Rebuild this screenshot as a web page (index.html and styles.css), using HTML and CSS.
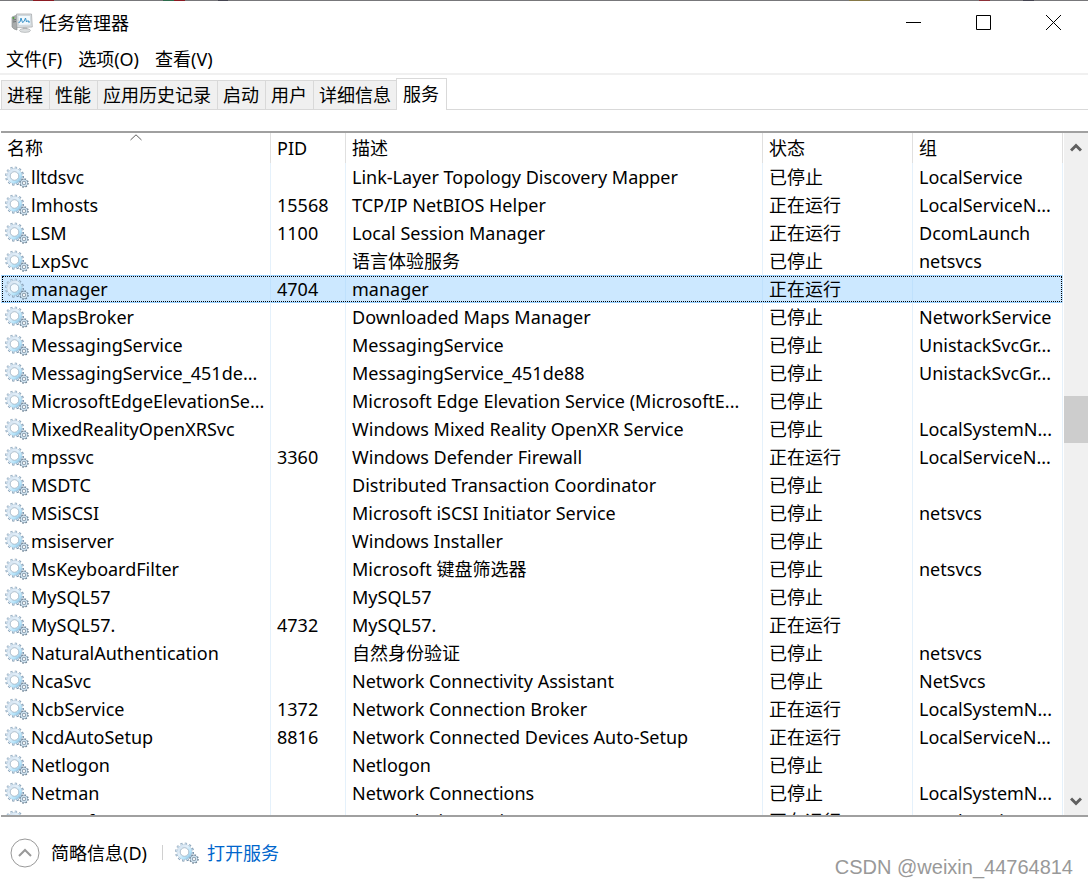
FILE: index.html
```html
<!DOCTYPE html>
<html lang="zh-CN">
<head>
  <meta charset="UTF-8" />
  <title>任务管理器</title>
  <link rel="stylesheet" href="styles.css">
</head>
<body>
  <!-- shared icons -->
  <svg class="sprite" aria-hidden="true">
    <defs>
      <linearGradient id="gear-fill" x1="0" y1="0" x2="1" y2="1">
        <stop offset="0" stop-color="#d3e2f0" />
        <stop offset="0.4" stop-color="#e3f0fa" />
        <stop offset="0.75" stop-color="#b4e4fb" />
        <stop offset="1" stop-color="#8fb9d8" />
      </linearGradient>
      <linearGradient id="gear-edge" x1="0" y1="0" x2="1" y2="1">
        <stop offset="0" stop-color="#a9bccd" />
        <stop offset="1" stop-color="#5f7f9b" />
      </linearGradient>
    </defs>
    <symbol id="gears" viewBox="0 0 24 22">
      <circle cx="9.5" cy="10" r="8.300" fill="none" stroke="url(#gear-edge)" stroke-width="2.400" stroke-dasharray="2.150 2.200" />
      <circle cx="9.5" cy="10" r="7.900" fill="none" stroke="#d6e8f5" stroke-width="1.600" stroke-dasharray="1.200 2.936" stroke-dashoffset="-0.450" />
      <circle cx="9.5" cy="10" r="7.400" fill="none" stroke="#9db6ca" stroke-width="0.600" />
      <circle cx="9.5" cy="10" r="5.900" fill="none" stroke="url(#gear-fill)" stroke-width="3" />
      <circle cx="9.5" cy="10" r="4.300" fill="#fff" fill-opacity="0.800" stroke="#8ba3b8" stroke-width="0.700" />
      <circle cx="19" cy="17" r="4" fill="none" stroke="#6f8496" stroke-width="1.600" stroke-dasharray="1.500 1.642" />
      <circle cx="19" cy="17" r="2.800" fill="#fff" stroke="#7b92a6" stroke-width="1.800" />
      <circle cx="19" cy="17" r="2.700" fill="none" stroke="#d4e8f5" stroke-width="1.100" />
      <circle cx="19" cy="17" r="1.600" fill="none" stroke="#71879a" stroke-width="0.700" />
    </symbol>
  </svg>

  <div class="window">
    <header class="titlebar">
      <svg class="app-icon" viewBox="0 0 22 20" aria-hidden="true">
        <path d="M1 4l5-2v15l-3-1-2-2z" fill="#a9acac" stroke="#858989" stroke-width="0.6" />
        <path d="M2 7l3-.5M2 9l3-.5" stroke="#5f6464" stroke-width="0.8" />
        <circle cx="2.5" cy="5" r="0.9" fill="#4ea83a" />
        <path d="M5.500 1h15l.8 13-15.300.5z" fill="#dfe2e4" stroke="#a1a5a8" stroke-width="0.7" />
        <path d="M7 2.500h12.300l.6 9.500-12.300.4z" fill="#f2f9fd" stroke="#b7c3cb" stroke-width="0.5" />
        <path d="M7.500 9.500l1.500-.5 1-4 1.500 4.500 1.500-1 1.500-3.500 1 4 1.500-1.500.8 2 1.200-1" fill="none" stroke="#3a93c9" stroke-width="1" />
        <path d="M12 14.500h4l1 2.500-6 .5z" fill="#a9adaf" />
        <ellipse cx="14" cy="17.500" rx="5.500" ry="1.900" fill="#dcdfe0" stroke="#a4a8aa" stroke-width="0.6" />
      </svg>
      <h1 class="title">任务管理器</h1>
      <div class="window-controls">
        <button type="button" aria-label="最小化"><svg viewBox="0 0 15 15"><path d="M0 7.500h15" /></svg></button>
        <button type="button" aria-label="最大化"><svg viewBox="0 0 15 15"><path d="M.5.5h14v14H.5z" /></svg></button>
        <button type="button" aria-label="关闭"><svg viewBox="0 0 15 15"><path d="M0 0l15 15M15 0L0 15" /></svg></button>
      </div>
    </header>

    <nav class="menubar">
      <button type="button">文件(F)</button>
      <button type="button">选项(O)</button>
      <button type="button">查看(V)</button>
    </nav>

    <div class="tabs" role="tablist">
      <button type="button" role="tab">进程</button>
      <button type="button" role="tab">性能</button>
      <button type="button" role="tab">应用历史记录</button>
      <button type="button" role="tab">启动</button>
      <button type="button" role="tab">用户</button>
      <button type="button" role="tab">详细信息</button>
      <button type="button" role="tab" class="active" aria-selected="true">服务</button>
    </div>

    <main class="list">
      <div class="list-view">
        <table class="services">
          <colgroup>
            <col class="col-name">
            <col class="col-pid">
            <col class="col-desc">
            <col class="col-status">
            <col class="col-group">
          </colgroup>
          <thead>
            <tr>
              <th class="sorted">名称<svg class="sort-arrow" viewBox="0 0 12 7" aria-hidden="true"><path d="M.5 6L6 .8 11.500 6" /></svg></th>
              <th>PID</th>
              <th>描述</th>
              <th>状态</th>
              <th>组</th>
            </tr>
          </thead>
          <tbody>
            <tr><td><svg class="gear"><use href="#gears" /></svg>lltdsvc</td><td></td><td>Link-Layer Topology Discovery Mapper</td><td>已停止</td><td>LocalService</td></tr>
            <tr><td><svg class="gear"><use href="#gears" /></svg>lmhosts</td><td>15568</td><td>TCP/IP NetBIOS Helper</td><td>正在运行</td><td>LocalServiceN...</td></tr>
            <tr><td><svg class="gear"><use href="#gears" /></svg>LSM</td><td>1100</td><td>Local Session Manager</td><td>正在运行</td><td>DcomLaunch</td></tr>
            <tr><td><svg class="gear"><use href="#gears" /></svg>LxpSvc</td><td></td><td>语言体验服务</td><td>已停止</td><td>netsvcs</td></tr>
            <tr class="selected"><td><svg class="gear"><use href="#gears" /></svg>manager</td><td>4704</td><td>manager</td><td>正在运行</td><td></td></tr>
            <tr><td><svg class="gear"><use href="#gears" /></svg>MapsBroker</td><td></td><td>Downloaded Maps Manager</td><td>已停止</td><td>NetworkService</td></tr>
            <tr><td><svg class="gear"><use href="#gears" /></svg>MessagingService</td><td></td><td>MessagingService</td><td>已停止</td><td>UnistackSvcGr...</td></tr>
            <tr><td><svg class="gear"><use href="#gears" /></svg>MessagingService_451de...</td><td></td><td>MessagingService_451de88</td><td>已停止</td><td>UnistackSvcGr...</td></tr>
            <tr><td><svg class="gear"><use href="#gears" /></svg>MicrosoftEdgeElevationSe...</td><td></td><td>Microsoft Edge Elevation Service (MicrosoftE...</td><td>已停止</td><td></td></tr>
            <tr><td><svg class="gear"><use href="#gears" /></svg>MixedRealityOpenXRSvc</td><td></td><td>Windows Mixed Reality OpenXR Service</td><td>已停止</td><td>LocalSystemN...</td></tr>
            <tr><td><svg class="gear"><use href="#gears" /></svg>mpssvc</td><td>3360</td><td>Windows Defender Firewall</td><td>正在运行</td><td>LocalServiceN...</td></tr>
            <tr><td><svg class="gear"><use href="#gears" /></svg>MSDTC</td><td></td><td>Distributed Transaction Coordinator</td><td>已停止</td><td></td></tr>
            <tr><td><svg class="gear"><use href="#gears" /></svg>MSiSCSI</td><td></td><td>Microsoft iSCSI Initiator Service</td><td>已停止</td><td>netsvcs</td></tr>
            <tr><td><svg class="gear"><use href="#gears" /></svg>msiserver</td><td></td><td>Windows Installer</td><td>已停止</td><td></td></tr>
            <tr><td><svg class="gear"><use href="#gears" /></svg>MsKeyboardFilter</td><td></td><td>Microsoft 键盘筛选器</td><td>已停止</td><td>netsvcs</td></tr>
            <tr><td><svg class="gear"><use href="#gears" /></svg>MySQL57</td><td></td><td>MySQL57</td><td>已停止</td><td></td></tr>
            <tr><td><svg class="gear"><use href="#gears" /></svg>MySQL57.</td><td>4732</td><td>MySQL57.</td><td>正在运行</td><td></td></tr>
            <tr><td><svg class="gear"><use href="#gears" /></svg>NaturalAuthentication</td><td></td><td>自然身份验证</td><td>已停止</td><td>netsvcs</td></tr>
            <tr><td><svg class="gear"><use href="#gears" /></svg>NcaSvc</td><td></td><td>Network Connectivity Assistant</td><td>已停止</td><td>NetSvcs</td></tr>
            <tr><td><svg class="gear"><use href="#gears" /></svg>NcbService</td><td>1372</td><td>Network Connection Broker</td><td>正在运行</td><td>LocalSystemN...</td></tr>
            <tr><td><svg class="gear"><use href="#gears" /></svg>NcdAutoSetup</td><td>8816</td><td>Network Connected Devices Auto-Setup</td><td>正在运行</td><td>LocalServiceN...</td></tr>
            <tr><td><svg class="gear"><use href="#gears" /></svg>Netlogon</td><td></td><td>Netlogon</td><td>已停止</td><td></td></tr>
            <tr><td><svg class="gear"><use href="#gears" /></svg>Netman</td><td></td><td>Network Connections</td><td>已停止</td><td>LocalSystemN...</td></tr>
            <tr><td><svg class="gear"><use href="#gears" /></svg>netprofm</td><td>2584</td><td>Network List Service</td><td>正在运行</td><td>LocalService</td></tr>
          </tbody>
        </table>
      </div>
      <div class="scrollbar">
        <button type="button" aria-label="向上滚动"><svg viewBox="0 0 12 9"><path d="M1 7.500l5-5 5 5" /></svg></button>
        <div class="track"><div class="thumb"></div></div>
        <button type="button" aria-label="向下滚动"><svg viewBox="0 0 12 9"><path d="M1 1.500l5 5 5-5" /></svg></button>
      </div>
    </main>

    <footer class="footer">
      <button type="button" class="fewer">
        <svg viewBox="0 0 30 30" aria-hidden="true"><circle cx="15" cy="15" r="14" /><path d="M9 18l6-6 6 6" /></svg>
        简略信息(D)
      </button>
      <span class="divider"></span>
      <a class="open-services" href="#"><svg class="gear"><use href="#gears" /></svg>打开服务</a>
      <span class="watermark">CSDN @weixin_44764814</span>
    </footer>
  </div>
</body>
</html>
```

FILE: styles.css
```css
* {
  box-sizing: border-box;
}

body {
  margin: 0;
  background: #fff;
  color: #000;
  font-family: "Noto Sans", "Noto Sans CJK SC", sans-serif;
  font-size: 18px;
  line-height: 28px;
}

button {
  margin: 0;
  padding: 0;
  border: none;
  background: none;
  color: inherit;
  font: inherit;
}

.sprite {
  position: absolute;
  width: 0;
  height: 0;
}

.window {
  display: flex;
  flex-direction: column;
  height: 100vh;
  overflow: hidden;
}

/* title bar */
.titlebar {
  display: flex;
  flex: none;
  align-items: center;
  height: 45px;
  padding-left: 11px;
  background: linear-gradient(90deg, #77777a 3%, #8b1a22 3% 5%, #77777a 5% 15%, #2d6b4c 15% 16%, #8b1a22 16% 17%, #77777a 17% 20%, #444450 20% 21%, #77777a 21% 78%, #857846 78% 80%, #77777a 80% 90%, #8b3038 90% 91%, #77777a 91% 94%, #444450 94% 95%, #77777a 95%) top / 100% 1px no-repeat;
}

.app-icon {
  width: 22px;
  height: 20px;
  margin-right: 6px;
}

.title {
  margin: 0;
  font-size: 18px;
  font-weight: normal;
}

.window-controls {
  display: flex;
  margin-left: auto;
}

.window-controls button {
  display: flex;
  align-items: center;
  justify-content: center;
  width: 70px;
  height: 45px;
}

.window-controls svg {
  width: 15px;
  height: 15px;
  fill: none;
  stroke: #000;
}

/* menu */
.menubar {
  display: flex;
  flex: none;
  gap: 16px;
  height: 30px;
  padding-left: 6px;
  border-bottom: 2px solid #f0f0f0;
}

/* tabs */
.tabs {
  display: flex;
  flex: none;
  align-items: flex-end;
  height: 35px;
  padding-left: 1px;
  border-bottom: 1px solid #d9d9d9;
}

.tabs button {
  height: 29px;
  padding: 0 6px 0 5px;
  border-top: 1px solid #d9d9d9;
  border-left: 1px solid #d9d9d9;
  background: #f0f0f0;
}

.tabs .active {
  height: 32px;
  margin: 0 0 -1px -1px;
  padding: 0 7px 2px 6px;
  border-right: 1px solid #d9d9d9;
  background: #fff;
}

/* service list */
.list {
  display: flex;
  flex: 1;
  min-height: 0;
  margin: 21px 0 0 1px;
  border-top: 2px solid #a0a0a0;
  border-bottom: 2px solid #a0a0a0;
}

.list-view {
  flex: 1;
  min-width: 0;
  overflow: hidden;
}

.services {
  width: 100%;
  table-layout: fixed;
  border-collapse: separate;
  border-spacing: 0;
}

.col-name {
  width: 270px;
}

.col-pid {
  width: 75px;
}

.col-status,
.col-group {
  width: 150px;
}

.services th,
.services td {
  height: 28px;
  padding: 0 0 0 6px;
  border-right: 1px solid #e5f1fb;
  overflow: hidden;
  text-align: left;
  white-space: nowrap;
}

.services th {
  height: 30px;
  border-color: #e0e0e0;
  font-weight: normal;
}

.services td:first-child {
  padding-left: 4px;
}

.sorted {
  position: relative;
}

.sort-arrow {
  position: absolute;
  top: 1px;
  left: 50%;
  width: 12px;
  height: 7px;
  margin-left: -6px;
  fill: none;
  stroke: #606060;
}

.gear {
  width: 24px;
  height: 22px;
  margin-right: 2px;
  vertical-align: -4px;
}

.services .gear {
  display: inline-block;
  margin-top: -4px;
}

.services .selected {
  outline: 1px dotted #000;
  outline-offset: -2px;
}

.services .selected td {
  border-right-color: #bfe1fd;
  background: #cce8ff;
  box-shadow: inset 0 1px #99d1ff, inset 0 -1px #99d1ff;
}

/* scrollbar */
.scrollbar {
  display: flex;
  flex-direction: column;
  width: 24px;
  margin-left: 1px;
  background: #f0f0f0;
}

.scrollbar button {
  display: flex;
  align-items: center;
  justify-content: center;
  height: 28px;
}

.scrollbar svg {
  width: 12px;
  height: 9px;
  fill: none;
  stroke: #606060;
  stroke-width: 3;
}

.track {
  display: flex;
  flex: 1;
  flex-direction: column;
}

.track::before {
  content: "";
  flex: 41;
}

.track::after {
  content: "";
  flex: 60;
}

.thumb {
  height: 47px;
  background: #cdcdcd;
}

/* footer */
.footer {
  display: flex;
  flex: none;
  align-items: center;
  height: 69px;
  padding: 2px 15px 0 10px;
}

.fewer,
.open-services {
  display: flex;
  align-items: center;
}

.fewer svg {
  width: 30px;
  height: 30px;
  margin-right: 11px;
  fill: none;
  stroke: #999;
}

.fewer path {
  stroke-width: 2;
}

.divider {
  width: 1px;
  height: 15px;
  margin: 0 12px 0 15px;
  background: #d0d0d0;
}

.open-services {
  color: #0066cc;
  text-decoration: none;
}

.open-services .gear {
  margin-right: 8px;
}

.watermark {
  margin-left: auto;
  padding-top: 28px;
  color: #999;
  font-family: "Liberation Sans", Arial, sans-serif;
  font-size: 20px;
}
```
